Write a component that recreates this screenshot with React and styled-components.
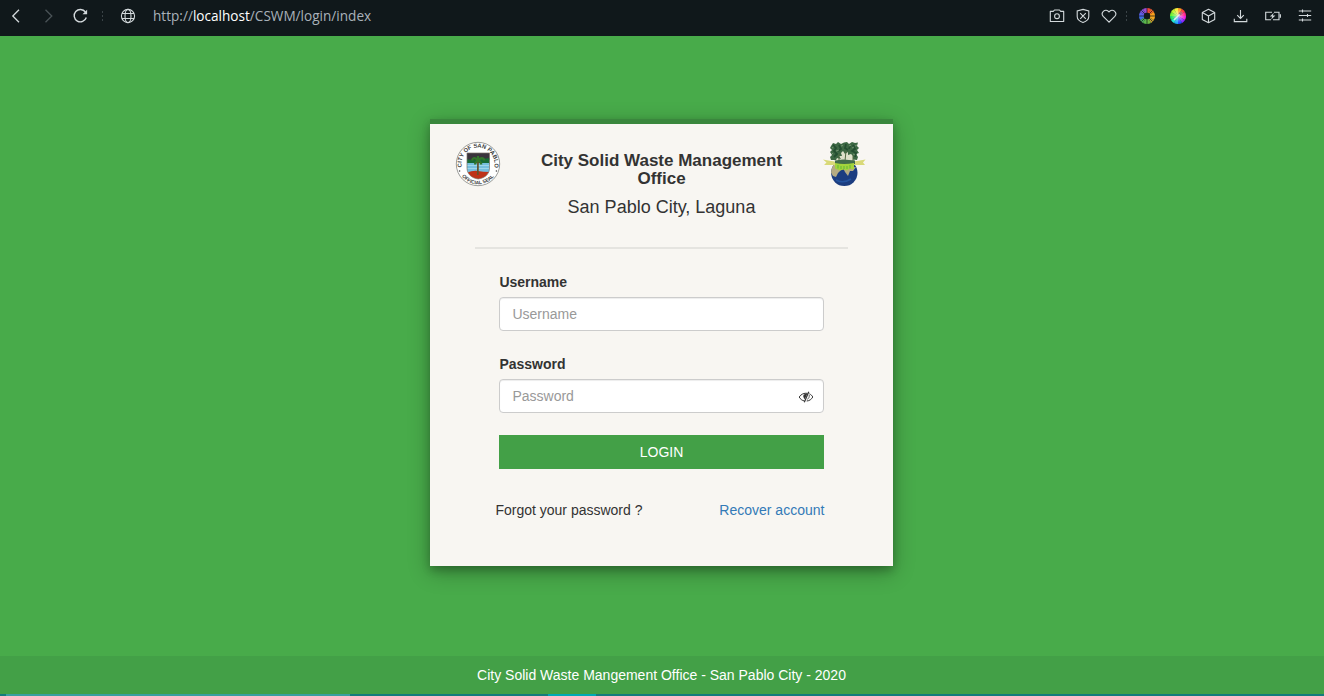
import React from 'react';
import styled, { createGlobalStyle } from 'styled-components';

const GlobalStyle = createGlobalStyle`
  * { box-sizing: border-box; }
  body {
    margin: 0;
    background: #48ab4a;
    color: #333;
    font-family: "Liberation Sans", Arial, sans-serif;
    font-size: 14px;
    line-height: 20px;
    overflow: hidden;
  }
`;

const Page = styled.div`
  display: flex;
  flex-direction: column;
  height: 100vh;
`;

const BrowserBar = styled.header`
  flex: none;
  display: flex;
  align-items: center;
  height: 36px;
  padding: 0 11px 4px 8px;
  background: #10181b;
`;

const BarIcon = styled.svg.attrs({ viewBox: '0 0 16 16', width: 16, height: 16 })`
  flex: none;
  display: block;
  margin-left: ${(p) => p.$gap || 0}px;
  fill: none;
  stroke: ${(p) => p.$tone || '#d3d9dc'};
  stroke-width: ${(p) => p.$weight || 1.1};
`;

const BarDivider = styled.span`
  flex: none;
  width: 1px;
  height: 11px;
  margin-left: ${(p) => p.$gap}px;
  background: repeating-linear-gradient(#3a4347 0 2px, transparent 2px 4px);
`;

const Address = styled.div`
  flex: 1;
  margin-left: 17px;
  color: #a9b1b9;
  font-family: "Open Sans", "Segoe UI", sans-serif;
  font-size: 13.6px;
  white-space: nowrap;
`;

const Host = styled.span`
  color: #fff;
`;

const Main = styled.main`
  flex: 1;
  display: flex;
  justify-content: center;
  align-items: flex-start;
  padding: 83px 1px 0 0;
`;

const Card = styled.section`
  width: 463px;
  height: 447px;
  border-top: 5px solid #3a873d;
  background: #f8f6f2;
  box-shadow: 0 4px 8px 0 rgba(0, 0, 0, 0.2), 0 6px 20px 0 rgba(0, 0, 0, 0.3);
`;

const CardHeader = styled.div`
  display: flex;
  justify-content: space-between;
  height: 123px;
  padding: 17px 26px 0 25px;
`;

const Emblem = styled.svg`
  flex: none;
  display: block;
  width: 46px;
  height: 46px;
`;

const Titles = styled.div`
  width: 252px;
  padding: 11px 0 0 1px;
  text-align: center;
`;

const Title = styled.h1`
  margin: 0;
  font-size: 17px;
  line-height: 18px;
  font-weight: bold;
`;

const Subtitle = styled.p`
  margin: 9px 0 0;
  font-size: 18px;
  line-height: 20px;
`;

const Rule = styled.hr`
  height: 2px;
  margin: 0 45px;
  border: 0;
  background: #e5e4e0;
`;

const Form = styled.form`
  padding: 23px 69px 0;
`;

const Field = styled.div`
  margin-bottom: ${(p) => p.$after}px;
`;

const Label = styled.label`
  display: block;
  margin-bottom: 5px;
  padding-left: 0.4px;
  font-weight: bold;
`;

const InputBox = styled.div`
  display: flex;
  align-items: center;
  height: 34px;
  padding: 0 9px 0 12.4px;
  border: 1px solid #ccc;
  border-radius: 4px;
  background: #fff;
  box-shadow: inset 0 1px 1px rgba(0, 0, 0, 0.075);
`;

const Input = styled.input`
  flex: 1;
  min-width: 0;
  padding: 0;
  border: 0;
  outline: 0;
  background: transparent;
  font: inherit;
  &::placeholder { color: #999; }
`;

const EyeIcon = styled.svg`
  flex: none;
  width: 16px;
  height: 14px;
  margin-top: 2px;
`;

const LoginButton = styled.button`
  display: block;
  width: 100%;
  height: 34px;
  padding: 0;
  border: 0;
  background: #43a047;
  color: #fff;
  font: inherit;
`;

const Recovery = styled.div`
  display: flex;
  justify-content: space-between;
  margin: 31px -0.4px 0 -3.6px;
`;

const Link = styled.a`
  color: #337ab7;
  text-decoration: none;
`;

const Footer = styled.footer`
  flex: none;
  height: 38px;
  padding: 9px 1px 0 0;
  background: #43a047;
  color: #fff;
  text-align: center;
`;

const TaskStrip = styled.div`
  flex: none;
  display: flex;
  height: 2px;
  background: #147b7d;
`;

const TaskSegment = styled.span`
  width: ${(p) => p.$width}px;
  margin-left: ${(p) => p.$gap}px;
  background: ${(p) => p.$color};
`;

const wheelColors = ['#f0443c', '#f5672c', '#fba01c', '#f5a820', '#c8a030', '#6cb840', '#5cb84a', '#4fae60', '#3f70e5', '#5b60e8', '#7b52dc', '#9b4ad0'];
const spectrum = ['#f5f03c', '#ff9a20', '#ff3b40', '#ff2890', '#f020e0', '#8a28ff', '#2848ff', '#20a8ff', '#20e8d0', '#20e060', '#70f030', '#c0f530'];

function wedge(i, r, turn = 0) {
  const a = ((i + turn) * Math.PI) / 6;
  const b = ((i + turn + 1) * Math.PI) / 6;
  return `M8 8L${8 + r * Math.sin(a)} ${8 - r * Math.cos(a)}A${r} ${r} 0 0 1 ${8 + r * Math.sin(b)} ${8 - r * Math.cos(b)}Z`;
}

function ColorWheel() {
  return (
    <BarIcon $gap={12}>
      {wheelColors.map((c, i) => <path key={c} d={wedge(i, 8)} fill={c} stroke="none" />)}
      <path d="M8 0V16M0 8H16M2.3 2.3L13.7 13.7M13.7 2.3L2.3 13.7" stroke="#10181b" strokeWidth=".7" />
      <circle cx="8" cy="8" r="3.2" fill="#10181b" stroke="none" />
    </BarIcon>
  );
}

function SpectrumBall() {
  return (
    <BarIcon $gap={15}>
      <defs>
        <radialGradient id="ballGlow"><stop stopColor="#fff" stopOpacity=".6" /><stop offset="1" stopColor="#fff" stopOpacity="0" /></radialGradient>
      </defs>
      {spectrum.map((c, i) => <path key={c} d={wedge(i, 8, -1)} fill={c} stroke={c} strokeWidth=".1" />)}
      <circle cx="8" cy="8" r="7" fill="url(#ballGlow)" stroke="none" />
      <path d="M4.2 11.8L9.8 6.2" stroke="#e8e8f0" strokeWidth="1.4" />
      <path d="M9 4.8L11.3 7M10.2 5.8L12 4" stroke="#a07080" strokeWidth="1.4" />
    </BarIcon>
  );
}

function CitySeal() {
  return (
    <Emblem viewBox="0 0 46 46">
      <defs>
        <path id="sealTop" d="M7.06 27.27A16.5 16.5 0 1 1 38.94 27.27" />
        <path id="sealBottom" d="M6 34A20.25 20.25 0 0 0 40 34" />
        <clipPath id="sealShield"><path d="M12 12H34.5V27C34.5 33 30 37 23.2 38C16.5 37 12 33 12 27Z" /></clipPath>
      </defs>
      <circle cx="23" cy="23" r="21.7" fill="#fff" stroke="#9c9d9a" strokeWidth="1" />
      <g fill="#3c3c3c" fontFamily="Liberation Sans" fontWeight="bold">
        <text fontSize="5.8"><textPath href="#sealTop" textLength="58" startOffset="1.2">CITY OF SAN PABLO</textPath></text>
        <text fontSize="5"><textPath href="#sealBottom" textLength="37" startOffset="1.6">OFFICIAL SEAL</textPath></text>
      </g>
      <circle cx="4.6" cy="30" r=".8" fill="#444" /><circle cx="41.4" cy="30" r=".8" fill="#444" />
      <g clipPath="url(#sealShield)">
        <path fill="#3a333c" d="M11 11H36V19H11Z" />
        <path fill="#176a35" d="M11 18L18 19L36 17V23H11Z" />
        <path fill="#76bfdf" d="M11 22H36V32H11Z" />
        <path d="M11 24.5H36M11 27.5H36" stroke="#a9dcec" strokeWidth=".8" />
        <path fill="#bf3218" d="M11 32Q18 29 23 30T36 31V39H11Z" />
        <path d="M23 18.5L22.8 34" stroke="#63532b" strokeWidth="1.7" />
        <path d="M23 19Q18 15 17 19.5M23 19Q20 22 20 23.5M23 19Q28 15 29.5 19.5M23 19Q26 21 26.5 23.5M23 19V15" fill="none" stroke="#34762b" strokeWidth="2.2" />
      </g>
      <path d="M12 12H34.5V27C34.5 33 30 37 23.2 38C16.5 37 12 33 12 27Z" fill="none" stroke="#7b7167" strokeWidth=".7" />
    </Emblem>
  );
}

function EarthEmblem() {
  return (
    <Emblem viewBox="0 0 46 46">
      <defs><clipPath id="earthClip"><circle cx="23.3" cy="31.8" r="13.2" /></clipPath></defs>
      <g clipPath="url(#earthClip)">
        <path fill="#1c3d80" d="M9 18H38V46H9Z" />
        <path fill="#b5ab83" d="M9 23H17L20 29L17 32L15 36L12 35L9 30ZM22 27L35 26L32 30L29 30L27 35L24 31Z" />
        <path d="M15 39Q22 43 30 38" stroke="#2454a0" strokeWidth="1.5" fill="none" />
      </g>
      <path fill="#d9d978" d="M2 18.5L10 20Q23 22 36 20L44.5 18.5L42 21.5L44 24L34 24Q23 27 12 24L3 24L5.5 21.5Z" />
      <path fill="#dde0ca" d="M14 9L25 11L33 9L34 21L13 21Z" />
      <path fill="#3d6844" d="M10 5L12 2L15 3L17 1L20 3L23 1.5L26 1L28 3L31 1L34 2L37 1.5L36 5L38 7L36 9L38 12L35 13L37 16L36 19L32 18.5L32 15L30 13L27 14L27 11L24 13L22 10L20 12L21 15L18 15L20 18L16 17L15 19L10 19L9 16L11 14L9 11L11 9L9 7Z" />
      <path d="M12 4L15 7L13 10L16 13L13 16M18 4L20 8L17 10M25 3L24 7L27 9M32 4L34 8L31 10L35 12L34 16M29 5L28 8" fill="none" stroke="#244e31" strokeWidth="1.8" />
      <path d="M11 7L12.5 6M20 5L22 4.5M28 5L30 4M34 5L36 4M15 10L18 9M31 7L33 6M11 12L12 13M32 13L34 14" stroke="#80a07b" strokeWidth=".8" />
      <path d="M25 10L24 20M18 13V20M32 14V20" stroke="#526b43" strokeWidth="1" />
      <path fill="#426c4b" d="M14 19.5L22 18.5L34 19.5V23H14Z" />
      <path fill="#a3d43c" d="M14 22Q23 24 33 22V28.5L29 27.5L26 29.5L23 28.5L19 29.5L14 27.5Z" />
      <path d="M17 24V27.5M20 25V28M23 25V28M26 25V28M29 24V27.5" stroke="#6bbd3a" strokeWidth="1.2" />
    </Emblem>
  );
}

function BrowserChrome() {
  return (
    <BrowserBar>
      <BarIcon $weight={1.3}><path d="M11 1.7L4.8 8L11 14.3" /></BarIcon>
      <BarIcon $gap={17} $tone="#4a5357" $weight={1.3}><path d="M4.5 1.7L10.8 8L4.5 14.3" /></BarIcon>
      <BarIcon $gap={15} $weight={1.4}><path d="M13.4 4A6.2 6.2 0 1 0 14.3 9.5" /><path d="M15.1 1.8V6.3H10.5Z" fill="#d3d9dc" stroke="none" /></BarIcon>
      <BarDivider $gap={14} />
      <BarIcon $gap={17} $weight={1.1}>
        <circle cx="8" cy="8" r="6.6" /><ellipse cx="8" cy="8" rx="3" ry="6.6" /><path d="M2 5.5H14M2 10.5H14" />
      </BarIcon>
      <Address>http://<Host>localhost</Host>/CSWM/login/index</Address>
      <BarIcon $weight={1.1}><path d="M1.3 3.4H4.3L5.5 2H10.5L11.7 3.4H14.7V13.5H1.3Z" strokeLinejoin="round" /><circle cx="8" cy="8.2" r="2.4" /></BarIcon>
      <BarIcon $gap={10}><path d="M8 1.4L13.8 3V8.5Q13.8 12.5 8 14.6Q2.2 12.5 2.2 8.5V3ZM5.2 5.2L10.8 10.8M10.8 5.2L5.2 10.8" /></BarIcon>
      <BarIcon $gap={10} $weight={1.1}><path d="M8 14.2L2.2 8.4C-.9 4.8 4.4-.6 8 3.9C11.6-.6 16.9 4.8 13.8 8.4Z" /></BarIcon>
      <BarDivider $gap={9} />
      <ColorWheel />
      <SpectrumBall />
      <BarIcon $gap={15}><path d="M7.5 1.2L13.7 4.5V11.5L7.5 14.8L1.3 11.5V4.5ZM1.3 4.5L7.5 8L13.7 4.5M7.5 8V14.8" strokeLinejoin="round" /></BarIcon>
      <BarIcon $gap={16} $weight={1.1}><path d="M7.5 2V10.5M4.2 7.2L7.5 10.5L10.8 7.2M1.3 10.8V13.6H13.8V10.8" /></BarIcon>
      <BarIcon $gap={16} $weight={1.1}><path d="M6 11.7H.7V4.3H7M9 4.3H14V11.7H8M15.4 6.3V9.7" /><path d="M8.8 4.8L4.8 8.6H7.2L6.2 11.4L10.4 7.4H7.8Z" fill="#d3d9dc" stroke="none" /></BarIcon>
      <BarIcon $gap={16} $weight={1.1}><path d="M1.8 3.5H14.2M1.8 8H14.2M1.8 12.5H14.2M5.5 1.9V5.1M10.5 6.4V9.6M5.5 10.9V14.1" transform="translate(0 -.5)" /></BarIcon>
    </BrowserBar>
  );
}

export default function App() {
  return (
    <Page>
      <GlobalStyle />
      <BrowserChrome />
      <Main>
        <Card>
          <CardHeader>
            <CitySeal />
            <Titles>
              <Title>City Solid Waste Management Office</Title>
              <Subtitle>San Pablo City, Laguna</Subtitle>
            </Titles>
            <EarthEmblem />
          </CardHeader>
          <Rule />
          <Form>
            <Field $after={23}>
              <Label htmlFor="username">Username</Label>
              <InputBox><Input id="username" placeholder="Username" /></InputBox>
            </Field>
            <Field $after={22}>
              <Label htmlFor="password">Password</Label>
              <InputBox>
                <Input id="password" type="password" placeholder="Password" />
                <EyeIcon viewBox="0 0 16 14" fill="none" stroke="#333" strokeWidth="1">
                  <path d="M6.6 11C4 10.6 2.2 9 1.2 7C3 4.2 6 2.8 9.6 3.3M11.3 3.8C13 4.5 14.1 5.7 14.8 7C13.5 9.3 11.5 10.8 8.7 11" />
                  <path d="M10.8 1.8L6.3 12.2" strokeWidth="1.2" />
                  <path d="M9.3 3.7C5.2 3.2 4 6.4 6.8 9.2Z" fill="#333" stroke="none" />
                  <path d="M11.2 5C11.5 7 10.8 8.5 9.3 9.3" strokeWidth=".8" />
                </EyeIcon>
              </InputBox>
            </Field>
            <LoginButton type="button">LOGIN</LoginButton>
            <Recovery>
              <span>Forgot your password ?</span>
              <Link href="#">Recover account</Link>
            </Recovery>
          </Form>
        </Card>
      </Main>
      <Footer>City Solid Waste Mangement Office - San Pablo City - 2020</Footer>
      <TaskStrip>
        <TaskSegment $gap={6} $width={344} $color="#3a9fa0" />
        <TaskSegment $gap={198} $width={48} $color="#00a9b5" />
      </TaskStrip>
    </Page>
  );
}
